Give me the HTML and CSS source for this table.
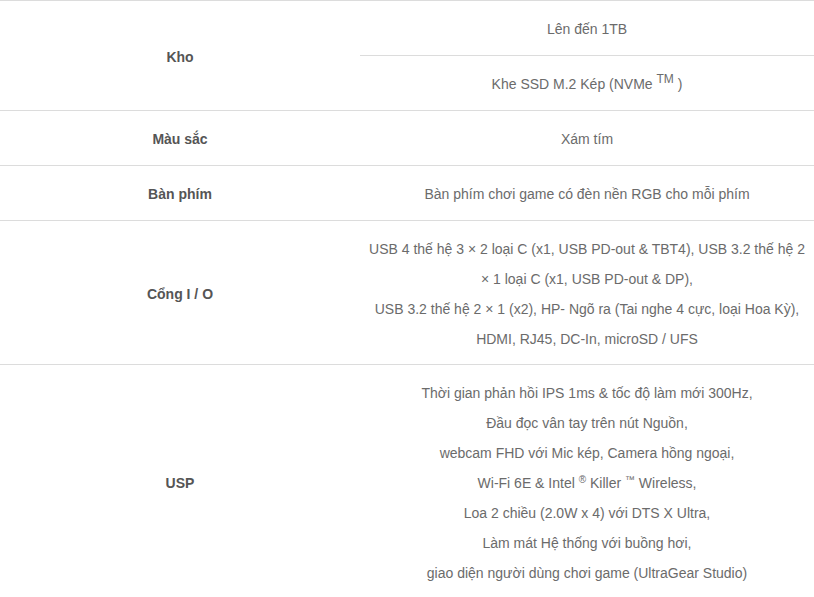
FILE: index.html
```html
<!DOCTYPE html>
<html lang="vi">
<head>
<meta charset="utf-8">
<title>Thông số</title>
<link rel="stylesheet" href="styles.css">
</head>
<body>
<table class="spec">
  <tbody>
    <tr>
      <th class="label" rowspan="2">Kho</th>
      <td class="value">Lên đến 1TB</td>
    </tr>
    <tr>
      <td class="value">Khe SSD M.2 Kép (NVMe <sup class="tm">TM</sup> )</td>
    </tr>
    <tr>
      <th class="label">Màu sắc</th>
      <td class="value">Xám tím</td>
    </tr>
    <tr>
      <th class="label">Bàn phím</th>
      <td class="value">Bàn phím chơi game có đèn nền RGB cho mỗi phím</td>
    </tr>
    <tr class="ports">
      <th class="label">Cổng I / O</th>
      <td class="value">USB 4 thế hệ 3 × 2 loại C (x1, USB PD-out &amp; TBT4), USB 3.2 thế hệ 2 ×&nbsp;1 loại C (x1, USB PD-out &amp; DP),<br> USB 3.2 thế hệ 2 × 1 (x2), HP- Ngõ ra (Tai nghe 4 cực, loại Hoa Kỳ),<br>HDMI, RJ45, DC-In, microSD / UFS</td>
    </tr>
    <tr>
      <th class="label">USP</th>
      <td class="value usp">Thời gian phản hồi IPS 1ms &amp; tốc độ làm mới 300Hz,<br>Đầu đọc vân tay trên nút Nguồn,<br> webcam FHD với Mic kép, Camera hồng ngoại,<br>Wi-Fi 6E &amp; Intel <sup class="mark">®</sup> Killer <sup class="mark">™</sup> Wireless,<br>Loa 2 chiều (2.0W x 4) với DTS X Ultra,<br>Làm mát Hệ thống với buồng hơi,<br> giao diện người dùng chơi game (UltraGear Studio)</td>
    </tr>
  </tbody>
</table>
</body>
</html>
```
FILE: styles.css
```css
html, body {
  margin: 0;
  padding: 0;
  background: #fff;
}
body {
  font-family: "Liberation Sans", Arial, sans-serif;
  color: #6b6b6b;
  font-size: 14px;
}
.spec {
  width: 814px;
  border-collapse: collapse;
  table-layout: fixed;
}
.spec th, .spec td {
  border-top: 1px solid #dcdcdc;
  border-bottom: 1px solid #dcdcdc;
  line-height: 30px;
  padding: 13px 2px 11px;
  text-align: center;
  vertical-align: middle;
}
.label {
  width: 356px;
  font-weight: bold;
  color: #555;
  padding-right: 4px;
}
.value {
  font-weight: normal;
}
.spec .ports td, .spec .ports th {
  padding-bottom: 10px;
}
.tm {
  font-size: 12px;
  line-height: 0;
  vertical-align: 6px;
}
.mark {
  font-size: 10px;
  line-height: 0;
  vertical-align: 5px;
}
```
